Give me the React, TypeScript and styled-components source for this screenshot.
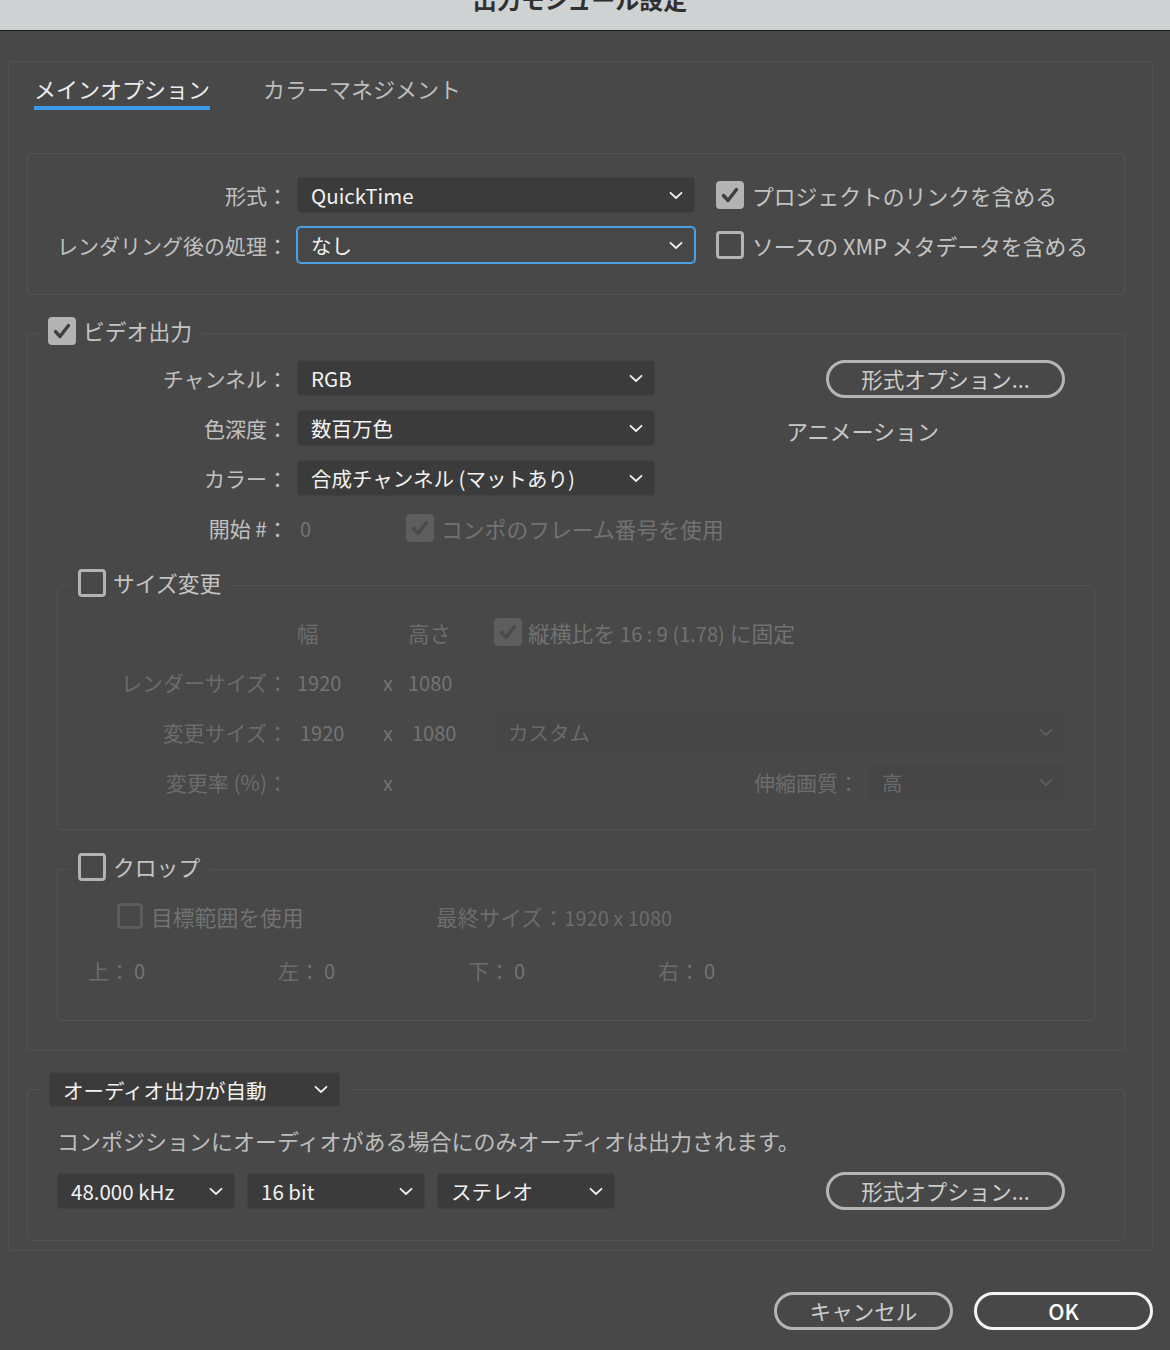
import React from 'react';
import styled, { createGlobalStyle } from 'styled-components';

const GlobalStyle = createGlobalStyle`
  html, body {
    margin: 0;
    padding: 0;
    background: #484848;
  }
  body {
    font-family: "Noto Sans CJK JP", "Noto Sans", sans-serif;
    color: #c2c2c2;
    -webkit-font-smoothing: antialiased;
  }
  * { box-sizing: border-box; }
`;

const Window = styled.div`
  width: 1170px;
  min-height: 1350px;
  background: #484848;
`;

const TitleBar = styled.div`
  height: 31px;
  background: #cfd2d3;
  border-bottom: 1px solid #1c1c1c;
  display: flex;
  justify-content: center;
  overflow: hidden;
`;

const Title = styled.div`
  font-size: 24px;
  font-weight: 700;
  line-height: 30px;
  color: #303030;
  margin-top: -16px;
  padding-right: 10px;
`;

const Body = styled.div`
  padding: 30px 17px 0 8px;
`;

const OuterPanel = styled.div`
  border: 1px solid #535353;
  border-radius: 4px;
  padding: 11px 27px 9px 18px;
`;

const Tabs = styled.div`
  display: flex;
  gap: 53px;
  padding-left: 7px;
`;

const Tab = styled.div<{ $active?: boolean }>`
  font-size: 22px;
  line-height: 30px;
  color: ${p => (p.$active ? '#ececec' : '#bdbdbd')};
  padding-bottom: 3px;
  border-bottom: 4px solid ${p => (p.$active ? '#3d9ae8' : 'transparent')};
  white-space: nowrap;
`;

const TopPanel = styled.div`
  margin-top: 43px;
  border: 1px solid #535353;
  border-radius: 4px;
  padding: 23px 0 31px 0;
`;

const FormGrid = styled.div<{ $cols: string }>`
  display: grid;
  grid-template-columns: ${p => p.$cols};
  grid-auto-rows: 36px;
  row-gap: 14px;
  align-items: center;
`;

const Label = styled.div<{ $dim?: boolean }>`
  font-size: 21px;
  color: ${p => (p.$dim ? '#6c6c6c' : '#c0c0c0')};
  text-align: right;
  padding-right: 9px;
  white-space: nowrap;
`;

const SelectBox = styled.div<{ $w?: number; $h?: number; $focused?: boolean; $disabled?: boolean; $pad?: number }>`
  flex: none;
  height: ${p => p.$h ?? 36}px;
  width: ${p => (p.$w ? `${p.$w}px` : '100%')};
  display: flex;
  align-items: center;
  justify-content: space-between;
  padding: 0 11px 0 ${p => p.$pad ?? 13}px;
  background: ${p => (p.$disabled ? '#464646' : p.$focused ? '#474747' : '#3b3b3b')};
  border: 1px solid ${p => (p.$focused ? '#4b9fe3' : p.$disabled ? '#474747' : '#414141')};
  box-shadow: ${p => (p.$focused ? '0 0 0 1px #4b9fe3' : 'none')};
  border-radius: 4px;
  font-size: 20.5px;
  color: ${p => (p.$disabled ? '#6a6a6a' : '#f2f2f2')};
  white-space: nowrap;
`;

const ChevronSvg = styled.svg<{ $dim?: boolean }>`
  flex: none;
  stroke: ${p => (p.$dim ? '#5e5e5e' : '#f0f0f0')};
`;

const Chevron = ({ dim }: { dim?: boolean }) => (
  <ChevronSvg width="14" height="9" viewBox="0 0 14 9" $dim={dim}>
    <polyline
      points="1.5,1.8 7,7 12.5,1.8"
      fill="none"
      strokeWidth="1.8"
      strokeLinecap="round"
      strokeLinejoin="round"
    />
  </ChevronSvg>
);

const Select = ({
  value,
  w,
  h,
  focused,
  disabled,
  pad,
}: {
  value: string;
  w?: number;
  h?: number;
  focused?: boolean;
  disabled?: boolean;
  pad?: number;
}) => (
  <SelectBox $w={w} $h={h} $focused={focused} $disabled={disabled} $pad={pad}>
    <span>{value}</span>
    <Chevron dim={disabled} />
  </SelectBox>
);

const Box = styled.div<{ $checked?: boolean; $disabled?: boolean; $size?: number }>`
  flex: none;
  width: ${p => p.$size ?? 28}px;
  height: ${p => p.$size ?? 28}px;
  border-radius: 4px;
  display: flex;
  align-items: center;
  justify-content: center;
  background: ${p => (p.$checked ? (p.$disabled ? '#5e5e5e' : '#b3b3b3') : 'transparent')};
  border: ${p => (p.$checked ? 'none' : `3px solid ${p.$disabled ? '#5c5c5c' : '#b3b3b3'}`)};
`;

const CheckMark = styled.svg<{ $disabled?: boolean }>`
  stroke: ${p => (p.$disabled ? '#4a4a4a' : '#3f3f3f')};
`;

const CheckBox = ({ checked, disabled, size }: { checked?: boolean; disabled?: boolean; size?: number }) => (
  <Box $checked={checked} $disabled={disabled} $size={size}>
    {checked && (
      <CheckMark width="20" height="20" viewBox="0 0 20 20" $disabled={disabled}>
        <polyline
          points="3.5,10.5 8,15.5 16.5,4.5"
          fill="none"
          strokeWidth="3.4"
          strokeLinecap="round"
          strokeLinejoin="round"
        />
      </CheckMark>
    )}
  </Box>
);

const CheckRow = styled.div<{ $gap?: number; $pad?: number }>`
  flex: none;
  display: flex;
  align-items: center;
  gap: ${p => p.$gap ?? 8}px;
  padding-left: ${p => p.$pad ?? 0}px;
  white-space: nowrap;
`;

const CheckText = styled.span<{ $dim?: boolean; $size?: number }>`
  font-size: ${p => p.$size ?? 21.8}px;
  color: ${p => (p.$dim ? '#727272' : '#c4c4c4')};
`;

const Group = styled.fieldset<{ $mt: number; $mx?: number; $pb: number; $pt?: number }>`
  margin: ${p => p.$mt}px ${p => p.$mx ?? 0}px 0 ${p => p.$mx ?? 0}px;
  border: 1px solid #535353;
  border-radius: 4px;
  padding: ${p => p.$pt ?? 10}px 0 ${p => p.$pb}px 0;
  min-width: 0;
`;

const Legend = styled.legend<{ $ml?: number; $pb?: number }>`
  margin-left: ${p => p.$ml ?? 10}px;
  padding: 0 10px ${p => p.$pb ?? 6}px 10px;
`;

const VideoBody = styled.div`
  display: flex;
  align-items: flex-start;
`;

const SideColumn = styled.div`
  margin-left: 131px;
  width: 279px;
  display: flex;
  flex-direction: column;
  align-items: flex-start;
`;

const PillButton = styled.button<{ $primary?: boolean; $w?: number }>`
  flex: none;
  width: ${p => p.$w ?? 239}px;
  height: 38px;
  border-radius: 19px;
  border: 3px solid ${p => (p.$primary ? '#f4f4f4' : '#b5b5b5')};
  background: transparent;
  color: ${p => (p.$primary ? '#ffffff' : '#cdcdcd')};
  font-family: "Noto Sans CJK JP", "Noto Sans", sans-serif;
  font-size: 21.5px;
  font-weight: ${p => (p.$primary ? 500 : 400)};
  line-height: 1;
  padding: 0;
  display: flex;
  align-items: center;
  justify-content: center;
`;

const SideButton = styled(PillButton)`
  align-self: flex-end;
`;

const SideText = styled.div`
  margin-top: 17px;
  font-size: 22px;
  line-height: 30px;
  color: #c8c8c8;
`;

const InlineValue = styled.div`
  display: flex;
  align-items: center;
`;

const DimValue = styled.span<{ $w?: number; $pad?: number }>`
  flex: none;
  font-size: 20px;
  color: #747474;
  width: ${p => (p.$w ? `${p.$w}px` : 'auto')};
  padding-left: ${p => p.$pad ?? 0}px;
  white-space: nowrap;
`;

const HeadCell = styled.div`
  font-size: 21.5px;
  color: #6c6c6c;
`;

const RightInline = styled.div`
  display: flex;
  justify-content: flex-end;
  align-items: center;
`;

const CropRow = styled.div`
  display: flex;
  align-items: center;
  height: 36px;
`;

const CropCheckArea = styled.div`
  width: 378px;
  padding-left: 59px;
`;

const FinalSize = styled.div`
  font-size: 21.5px;
  color: #6c6c6c;
  white-space: nowrap;
`;

const SmallNum = styled.span`
  font-size: 20px;
`;

const EdgeRow = styled.div`
  margin-top: 18px;
  display: grid;
  grid-template-columns: repeat(4, 190px);
  padding-left: 30px;
  height: 36px;
  align-items: center;
`;

const EdgeItem = styled.div`
  display: flex;
  align-items: center;
  gap: 4px;
  font-size: 21px;
  color: #6c6c6c;
`;

const AudioBody = styled.div`
  padding: 0 59px 0 29px;
`;

const AudioNote = styled.div`
  font-size: 22px;
  line-height: 30px;
  color: #bdbdbd;
  white-space: nowrap;
`;

const AudioControls = styled.div`
  margin-top: 17px;
  display: flex;
  align-items: center;
  gap: 12px;
`;

const Spacer = styled.div`
  flex: 1;
`;

const Footer = styled.div`
  margin-top: 41px;
  display: flex;
  justify-content: flex-end;
  gap: 21px;
`;

export default function App() {
  return (
    <Window>
      <GlobalStyle />
      <TitleBar>
        <Title>出力モジュール設定</Title>
      </TitleBar>
      <Body>
        <OuterPanel>
          <Tabs>
            <Tab $active>メインオプション</Tab>
            <Tab>カラーマネジメント</Tab>
          </Tabs>

          <TopPanel>
            <FormGrid $cols="269px 398px 1fr">
              <Label>形式：</Label>
              <Select value="QuickTime" />
              <CheckRow $pad={21}>
                <CheckBox checked />
                <CheckText>プロジェクトのリンクを含める</CheckText>
              </CheckRow>

              <Label>レンダリング後の処理：</Label>
              <Select value="なし" focused />
              <CheckRow $pad={21}>
                <CheckBox />
                <CheckText>ソースの XMP メタデータを含める</CheckText>
              </CheckRow>
            </FormGrid>
          </TopPanel>

          <Group $mt={20} $pb={29} $pt={8}>
            <Legend>
              <CheckRow $gap={7}>
                <CheckBox checked />
                <CheckText>ビデオ出力</CheckText>
              </CheckRow>
            </Legend>

            <VideoBody>
              <FormGrid $cols="269px 358px">
                <Label>チャンネル：</Label>
                <Select value="RGB" />
                <Label>色深度：</Label>
                <Select value="数百万色" />
                <Label>カラー：</Label>
                <Select value="合成チャンネル (マットあり)" />
                <Label>開始 #：</Label>
                <InlineValue>
                  <DimValue $w={109} $pad={3}>0</DimValue>
                  <CheckRow $gap={7}>
                    <CheckBox checked disabled />
                    <CheckText $dim>コンポのフレーム番号を使用</CheckText>
                  </CheckRow>
                </InlineValue>
              </FormGrid>

              <SideColumn>
                <SideButton>形式オプション...</SideButton>
                <SideText>アニメーション</SideText>
              </SideColumn>
            </VideoBody>

            <Group $mt={21} $mx={29} $pb={29}>
              <Legend>
                <CheckRow $gap={7}>
                  <CheckBox />
                  <CheckText>サイズ変更</CheckText>
                </CheckRow>
              </Legend>
              <FormGrid $cols="239px 86px 25px 86px 571px">
                <span />
                <HeadCell>幅</HeadCell>
                <span />
                <HeadCell>高さ</HeadCell>
                <CheckRow $gap={6}>
                  <CheckBox checked disabled />
                  <CheckText $dim>
                    縦横比を <SmallNum>16 : 9 (1.78)</SmallNum> に固定
                  </CheckText>
                </CheckRow>

                <Label $dim>レンダーサイズ：</Label>
                <DimValue>1920</DimValue>
                <DimValue>x</DimValue>
                <DimValue>1080</DimValue>
                <span />

                <Label $dim>変更サイズ：</Label>
                <DimValue $pad={3}>1920</DimValue>
                <DimValue>x</DimValue>
                <DimValue $pad={4}>1080</DimValue>
                <Select value="カスタム" disabled />

                <Label $dim>変更率 (%)：</Label>
                <span />
                <DimValue>x</DimValue>
                <span />
                <RightInline>
                  <Label $dim>伸縮画質：</Label>
                  <Select value="高" w={197} disabled />
                </RightInline>
              </FormGrid>
            </Group>

            <Group $mt={21} $mx={29} $pb={32}>
              <Legend>
                <CheckRow $gap={7}>
                  <CheckBox />
                  <CheckText>クロップ</CheckText>
                </CheckRow>
              </Legend>
              <CropRow>
                <CropCheckArea>
                  <CheckRow $gap={8}>
                    <CheckBox disabled size={26} />
                    <CheckText $dim>目標範囲を使用</CheckText>
                  </CheckRow>
                </CropCheckArea>
                <FinalSize>
                  最終サイズ：<SmallNum>1920 x 1080</SmallNum>
                </FinalSize>
              </CropRow>
              <EdgeRow>
                <EdgeItem>上：<DimValue>0</DimValue></EdgeItem>
                <EdgeItem>左：<DimValue>0</DimValue></EdgeItem>
                <EdgeItem>下：<DimValue>0</DimValue></EdgeItem>
                <EdgeItem>右：<DimValue>0</DimValue></EdgeItem>
              </EdgeRow>
            </Group>
          </Group>

          <Group $mt={21} $pb={30} $pt={18}>
            <Legend $ml={11} $pb={0}>
              <Select value="オーディオ出力が自動" w={291} h={35} />
            </Legend>
            <AudioBody>
              <AudioNote>コンポジションにオーディオがある場合にのみオーディオは出力されます。</AudioNote>
              <AudioControls>
                <Select value="48.000 kHz" w={178} />
                <Select value="16 bit" w={178} />
                <Select value="ステレオ" w={178} />
                <Spacer />
                <PillButton>形式オプション...</PillButton>
              </AudioControls>
            </AudioBody>
          </Group>
        </OuterPanel>

        <Footer>
          <PillButton $w={179}>キャンセル</PillButton>
          <PillButton $w={179} $primary>OK</PillButton>
        </Footer>
      </Body>
    </Window>
  );
}
